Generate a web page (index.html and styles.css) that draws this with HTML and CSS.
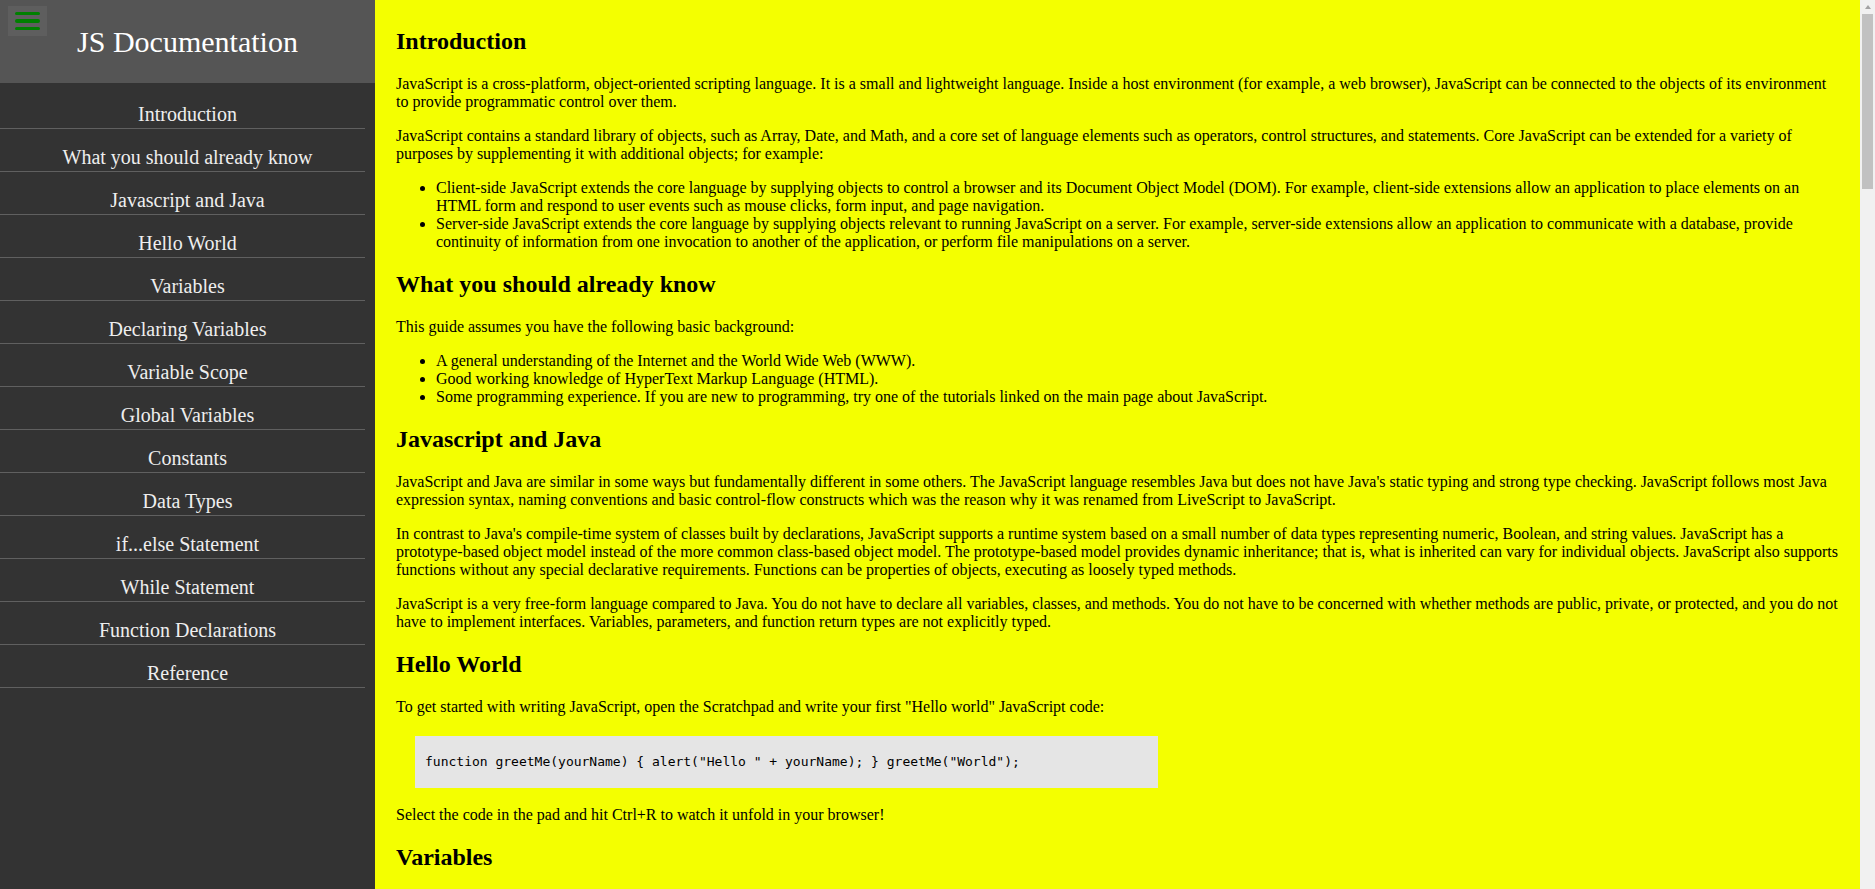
FILE: index.html
```html
<!DOCTYPE html>
<html lang="en">
<head>
<meta charset="utf-8">
<title>JS Documentation</title>
<link rel="stylesheet" href="styles.css">
</head>
<body>
<div class="layout">
  <nav class="sidebar" id="navbar">
    <header class="sidebar-header">
      <button class="menu-btn" type="button" aria-label="Menu"><span></span><span></span><span></span></button>
      <h1 class="sidebar-title">JS Documentation</h1>
    </header>
    <ul class="nav-list">
      <li class="nav-item"><a class="nav-link" href="#Introduction">Introduction</a></li>
      <li class="nav-item"><a class="nav-link" href="#What_you_should_already_know">What you should already know</a></li>
      <li class="nav-item"><a class="nav-link" href="#JavaScript_and_Java">Javascript and Java</a></li>
      <li class="nav-item"><a class="nav-link" href="#Hello_world">Hello World</a></li>
      <li class="nav-item"><a class="nav-link" href="#Variables">Variables</a></li>
      <li class="nav-item"><a class="nav-link" href="#Declaring_variables">Declaring Variables</a></li>
      <li class="nav-item"><a class="nav-link" href="#Variable_scope">Variable Scope</a></li>
      <li class="nav-item"><a class="nav-link" href="#Global_variables">Global Variables</a></li>
      <li class="nav-item"><a class="nav-link" href="#Constants">Constants</a></li>
      <li class="nav-item"><a class="nav-link" href="#Data_types">Data Types</a></li>
      <li class="nav-item"><a class="nav-link" href="#if...else_statement">if...else Statement</a></li>
      <li class="nav-item"><a class="nav-link" href="#while_statement">While Statement</a></li>
      <li class="nav-item"><a class="nav-link" href="#Function_declarations">Function Declarations</a></li>
      <li class="nav-item"><a class="nav-link" href="#Reference">Reference</a></li>
    </ul>
  </nav>

  <main class="main" id="main-doc">
    <section class="section" id="Introduction">
      <h2 class="section-title">Introduction</h2>
      <p>JavaScript is a cross-platform, object-oriented scripting language. It is a small and lightweight language. Inside a host environment (for example, a web browser), JavaScript can be connected to the objects of its environment to provide programmatic control over them.</p>
      <p>JavaScript contains a standard library of objects, such as Array, Date, and Math, and a core set of language elements such as operators, control structures, and statements. Core JavaScript can be extended for a variety of purposes by supplementing it with additional objects; for example:</p>
      <ul class="list">
        <li>Client-side JavaScript extends the core language by supplying objects to control a browser and its Document Object Model (DOM). For example, client-side extensions allow an application to place elements on an HTML form and respond to user events such as mouse clicks, form input, and page navigation.</li>
        <li>Server-side JavaScript extends the core language by supplying objects relevant to running JavaScript on a server. For example, server-side extensions allow an application to communicate with a database, provide continuity of information from one invocation to another of the application, or perform file manipulations on a server.</li>
      </ul>
    </section>

    <section class="section" id="What_you_should_already_know">
      <h2 class="section-title">What you should already know</h2>
      <p>This guide assumes you have the following basic background:</p>
      <ul class="list">
        <li>A general understanding of the Internet and the World Wide Web (WWW).</li>
        <li>Good working knowledge of HyperText Markup Language (HTML).</li>
        <li>Some programming experience. If you are new to programming, try one of the tutorials linked on the main page about JavaScript.</li>
      </ul>
    </section>

    <section class="section" id="JavaScript_and_Java">
      <h2 class="section-title">Javascript and Java</h2>
      <p>JavaScript and Java are similar in some ways but fundamentally different in some others. The JavaScript language resembles Java but does not have Java's static typing and strong type checking. JavaScript follows most Java expression syntax, naming conventions and basic control-flow constructs which was the reason why it was renamed from LiveScript to JavaScript.</p>
      <p>In contrast to Java's compile-time system of classes built by declarations, JavaScript supports a runtime system based on a small number of data types representing numeric, Boolean, and string values. JavaScript has a prototype-based object model instead of the more common class-based object model. The prototype-based model provides dynamic inheritance; that is, what is inherited can vary for individual objects. JavaScript also supports functions without any special declarative requirements. Functions can be properties of objects, executing as loosely typed methods.</p>
      <p>JavaScript is a very free-form language compared to Java. You do not have to declare all variables, classes, and methods. You do not have to be concerned with whether methods are public, private, or protected, and you do not have to implement interfaces. Variables, parameters, and function return types are not explicitly typed.</p>
    </section>

    <section class="section" id="Hello_world">
      <h2 class="section-title">Hello World</h2>
      <p>To get started with writing JavaScript, open the Scratchpad and write your first "Hello world" JavaScript code:</p>
      <code class="code">function greetMe(yourName) { alert("Hello " + yourName); } greetMe("World");</code>
      <p>Select the code in the pad and hit Ctrl+R to watch it unfold in your browser!</p>
    </section>

    <section class="section" id="Variables">
      <h2 class="section-title">Variables</h2>
      <p>You use variables as symbolic names for values in your application. The names of variables, called identifiers, conform to certain rules.</p>
      <p>A JavaScript identifier must start with a letter, underscore (_), or dollar sign ($); subsequent characters can also be digits (0-9). Because JavaScript is case sensitive, letters include the characters "A" through "Z" (uppercase) and the characters "a" through "z" (lowercase).</p>
      <p>You can use ISO 8859-1 or Unicode letters such as å and ü in identifiers. You can also use the Unicode escape sequences as characters in identifiers. Some examples of legal names are Number_hits, temp99, and _name.</p>
    </section>

    <section class="section" id="Declaring_variables">
      <h2 class="section-title">Declaring Variables</h2>
      <p>You can declare a variable in three ways:</p>
      <p>With the keyword var. For example,</p>
      <code class="code">var x = 42.</code>
      <p>This syntax can be used to declare both local and global variables.</p>
      <p>By simply assigning it a value. For example,</p>
      <code class="code">x = 42.</code>
      <p>This always declares a global variable. It generates a strict JavaScript warning. You shouldn't use this variant.</p>
      <p>With the keyword let. For example,</p>
      <code class="code">let y = 13.</code>
      <p>This syntax can be used to declare a block scope local variable. See Variable scope below.</p>
    </section>

    <section class="section" id="Variable_scope">
      <h2 class="section-title">Variable Scope</h2>
      <p>When you declare a variable outside of any function, it is called a global variable, because it is available to any other code in the current document. When you declare a variable within a function, it is called a local variable, because it is available only within that function.</p>
      <p>JavaScript before ECMAScript 2015 does not have block statement scope; rather, a variable declared within a block is local to the function (or global scope) that the block resides within. For example the following code will log 5, because the scope of x is the function (or global context) within which x is declared, not the block, which in this case is an if statement.</p>
      <code class="code">if (true) { var x = 5; } console.log(x); // 5</code>
      <p>This behavior changes, when using the let declaration introduced in ECMAScript 2015.</p>
      <code class="code">if (true) { let y = 5; } console.log(y); // ReferenceError: y is not defined</code>
    </section>

    <section class="section" id="Global_variables">
      <h2 class="section-title">Global Variables</h2>
      <p>Global variables are in fact properties of the global object. In web pages the global object is window, so you can set and access global variables using the window.variable syntax.</p>
      <p>Consequently, you can access global variables declared in one window or frame from another window or frame by specifying the window or frame name. For example, if a variable called phoneNumber is declared in a document, you can refer to this variable from an iframe as parent.phoneNumber.</p>
    </section>

    <section class="section" id="Constants">
      <h2 class="section-title">Constants</h2>
      <p>You can create a read-only, named constant with the const keyword. The syntax of a constant identifier is the same as for a variable identifier: it must start with a letter, underscore or dollar sign and can contain alphabetic, numeric, or underscore characters.</p>
      <code class="code">const PI = 3.14;</code>
      <p>A constant cannot change value through assignment or be re-declared while the script is running. It has to be initialized to a value.</p>
      <p>The scope rules for constants are the same as those for let block scope variables. If the const keyword is omitted, the identifier is assumed to represent a variable.</p>
      <p>You cannot declare a constant with the same name as a function or variable in the same scope. For example:</p>
      <code class="code">// THIS WILL CAUSE AN ERROR function f() {}; const f = 5; // THIS WILL CAUSE AN ERROR ALSO function f() { const g = 5; var g; //statements }</code>
      <p>However, object attributes are not protected, so the following statement is executed without problems.</p>
      <code class="code">const MY_OBJECT = {"key": "value"}; MY_OBJECT.key = "otherValue";</code>
    </section>

    <section class="section" id="Data_types">
      <h2 class="section-title">Data Types</h2>
      <p>The latest ECMAScript standard defines seven data types:</p>
      <ul class="list">
        <li>Six data types that are primitives:
          <ul class="list">
            <li>Boolean. true and false.</li>
            <li>null. A special keyword denoting a null value. Because JavaScript is case-sensitive, null is not the same as Null, NULL, or any other variant.</li>
            <li>undefined. A top-level property whose value is undefined.</li>
            <li>Number. 42 or 3.14159.</li>
            <li>String. "Howdy"</li>
            <li>Symbol (new in ECMAScript 2015). A data type whose instances are unique and immutable.</li>
          </ul>
        </li>
        <li>and Object</li>
      </ul>
      <p>Although these data types are a relatively small amount, they enable you to perform useful functions with your applications. Objects and functions are the other fundamental elements in the language. You can think of objects as named containers for values, and functions as procedures that your application can perform.</p>
    </section>

    <section class="section" id="if...else_statement">
      <h2 class="section-title">if...else Statement</h2>
      <p>Use the if statement to execute a statement if a logical condition is true. Use the optional else clause to execute a statement if the condition is false. An if statement looks as follows:</p>
      <code class="code">if (condition) { statement_1; } else { statement_2; }</code>
      <p>condition can be any expression that evaluates to true or false. See Boolean for an explanation of what evaluates to true and false. If condition evaluates to true, statement_1 is executed; otherwise, statement_2 is executed. statement_1 and statement_2 can be any statement, including further nested if statements.</p>
      <p>You may also compound the statements using else if to have multiple conditions tested in sequence, as follows:</p>
      <code class="code">if (condition_1) { statement_1; } else if (condition_2) { statement_2; } else if (condition_n) { statement_n; } else { statement_last; }</code>
      <p>In the case of multiple conditions only the first logical condition which evaluates to true will be executed. To execute multiple statements, group them within a block statement ({ ... }) . In general, it's good practice to always use block statements, especially when nesting if statements:</p>
      <code class="code">if (condition) { statement_1_runs_if_condition_is_true; statement_2_runs_if_condition_is_true; } else { statement_3_runs_if_condition_is_false; statement_4_runs_if_condition_is_false; }</code>
      <p>It is advisable to not use simple assignments in a conditional expression, because the assignment can be confused with equality when glancing over the code. For example, do not use the following code:</p>
      <code class="code">if (x = y) { /* statements here */ }</code>
      <p>If you need to use an assignment in a conditional expression, a common practice is to put additional parentheses around the assignment. For example:</p>
      <code class="code">if ((x = y)) { /* statements here */ }</code>
    </section>

    <section class="section" id="while_statement">
      <h2 class="section-title">While Statement</h2>
      <p>A while statement executes its statements as long as a specified condition evaluates to true. A while statement looks as follows:</p>
      <code class="code">while (condition) statement</code>
      <p>If the condition becomes false, statement within the loop stops executing and control passes to the statement following the loop.</p>
      <p>The condition test occurs before statement in the loop is executed. If the condition returns true, statement is executed and the condition is tested again. If the condition returns false, execution stops and control is passed to the statement following while.</p>
      <p>To execute multiple statements, use a block statement ({ ... }) to group those statements.</p>
      <p>Example:</p>
      <p>The following while loop iterates as long as n is less than three:</p>
      <code class="code">var n = 0; var x = 0; while (n &lt; 3) { n++; x += n; }</code>
      <p>With each iteration, the loop increments n and adds that value to x. Therefore, x and n take on the following values:</p>
      <ul class="list">
        <li>After the first pass: n = 1 and x = 1</li>
        <li>After the second pass: n = 2 and x = 3</li>
        <li>After the third pass: n = 3 and x = 6</li>
      </ul>
      <p>After completing the third pass, the condition n &lt; 3 is no longer true, so the loop terminates.</p>
    </section>

    <section class="section" id="Function_declarations">
      <h2 class="section-title">Function Declarations</h2>
      <p>A function definition (also called a function declaration, or function statement) consists of the function keyword, followed by:</p>
      <ul class="list">
        <li>The name of the function.</li>
        <li>A list of arguments to the function, enclosed in parentheses and separated by commas.</li>
        <li>The JavaScript statements that define the function, enclosed in curly brackets, { }.</li>
      </ul>
      <p>For example, the following code defines a simple function named square:</p>
      <code class="code">function square(number) { return number * number; }</code>
      <p>The function square takes one argument, called number. The function consists of one statement that says to return the argument of the function (that is, number) multiplied by itself. The return statement specifies the value returned by the function.</p>
      <code class="code">return number * number;</code>
      <p>Primitive parameters (such as a number) are passed to functions by value; the value is passed to the function, but if the function changes the value of the parameter, this change is not reflected globally or in the calling function.</p>
    </section>

    <section class="section" id="Reference">
      <h2 class="section-title">Reference</h2>
      <ul class="list">
        <li>All the documentation in this page is taken from MDN</li>
      </ul>
    </section>
  </main>

  <div class="scrollbar" aria-hidden="true">
    <div class="scroll-up"><span class="scroll-arrow"></span></div>
    <div class="scroll-track"><div class="scroll-thumb"></div></div>
  </div>
</div>
</body>
</html>
```

FILE: styles.css
```css
* {
  box-sizing: border-box;
}

html,
body {
  margin: 0;
  padding: 0;
  height: 100%;
  overflow: hidden;
}

body {
  background: #f4ff00;
  color: #000;
  font-family: "Liberation Serif", "Times New Roman", serif;
  font-size: 16px;
}

.layout {
  display: grid;
  grid-template-columns: 375px 1fr 15px;
  height: 100vh;
}

/* ---------- sidebar ---------- */
.sidebar {
  background: #333;
  height: 100vh;
}

.sidebar-header {
  position: relative;
  background: #555;
  padding: 24px 0;
  text-align: center;
}

.sidebar-title {
  margin: 0;
  font-size: 30px;
  line-height: 35px;
  font-weight: normal;
  color: #fff;
}

.menu-btn {
  position: absolute;
  left: 8px;
  top: 6px;
  width: 39px;
  height: 30px;
  margin: 0;
  border: 0;
  padding: 6px 7px;
  background: #5e5e5e;
  display: flex;
  flex-direction: column;
  gap: 4px;
}

.menu-btn span {
  display: block;
  width: 25px;
  height: 4px;
  border-radius: 2px;
  background: #008000;
}

.nav-list {
  list-style: none;
  margin: 0;
  padding: 3px 0 0;
}

.nav-item {
  width: 365px;
  padding: 17px 0 2px 10px;
  border-bottom: 1px solid #606060;
  text-align: center;
  font-size: 20px;
  line-height: 23px;
}

.nav-link {
  color: #eee;
  text-decoration: none;
}

/* ---------- main ---------- */
.main {
  height: 100vh;
  overflow-y: auto;
  scrollbar-width: none;
  padding: 8px 20px 8px 21px;
}

.main::-webkit-scrollbar {
  display: none;
}

.section-title {
  font-size: 24px;
  font-weight: bold;
  margin: 20px 0;
}

.main p {
  margin: 16px 0;
}

.list {
  margin: 16px 0;
  padding-left: 40px;
}

.list .list {
  margin: 0;
}

.code {
  display: block;
  width: 743px;
  margin: 20px 0 18px 19px;
  padding: 18px 10px 19px;
  background: #e5e5e5;
  font-family: "DejaVu Sans Mono", monospace;
  font-size: 13px;
  line-height: 15px;
  white-space: pre-wrap;
}

/* ---------- page scrollbar ---------- */
.scrollbar {
  display: flex;
  flex-direction: column;
  height: 100vh;
  background: #f1f1f1;
}

.scroll-up {
  height: 14px;
  display: flex;
  justify-content: center;
  padding-top: 5px;
}

.scroll-arrow {
  width: 0;
  height: 0;
  border-left: 3.5px solid transparent;
  border-right: 3.5px solid transparent;
  border-bottom: 4px solid #a3a3a3;
}

.scroll-track {
  flex: 1;
  padding: 0 2px;
}

.scroll-thumb {
  height: 175px;
  background: #c1c1c1;
}
```
